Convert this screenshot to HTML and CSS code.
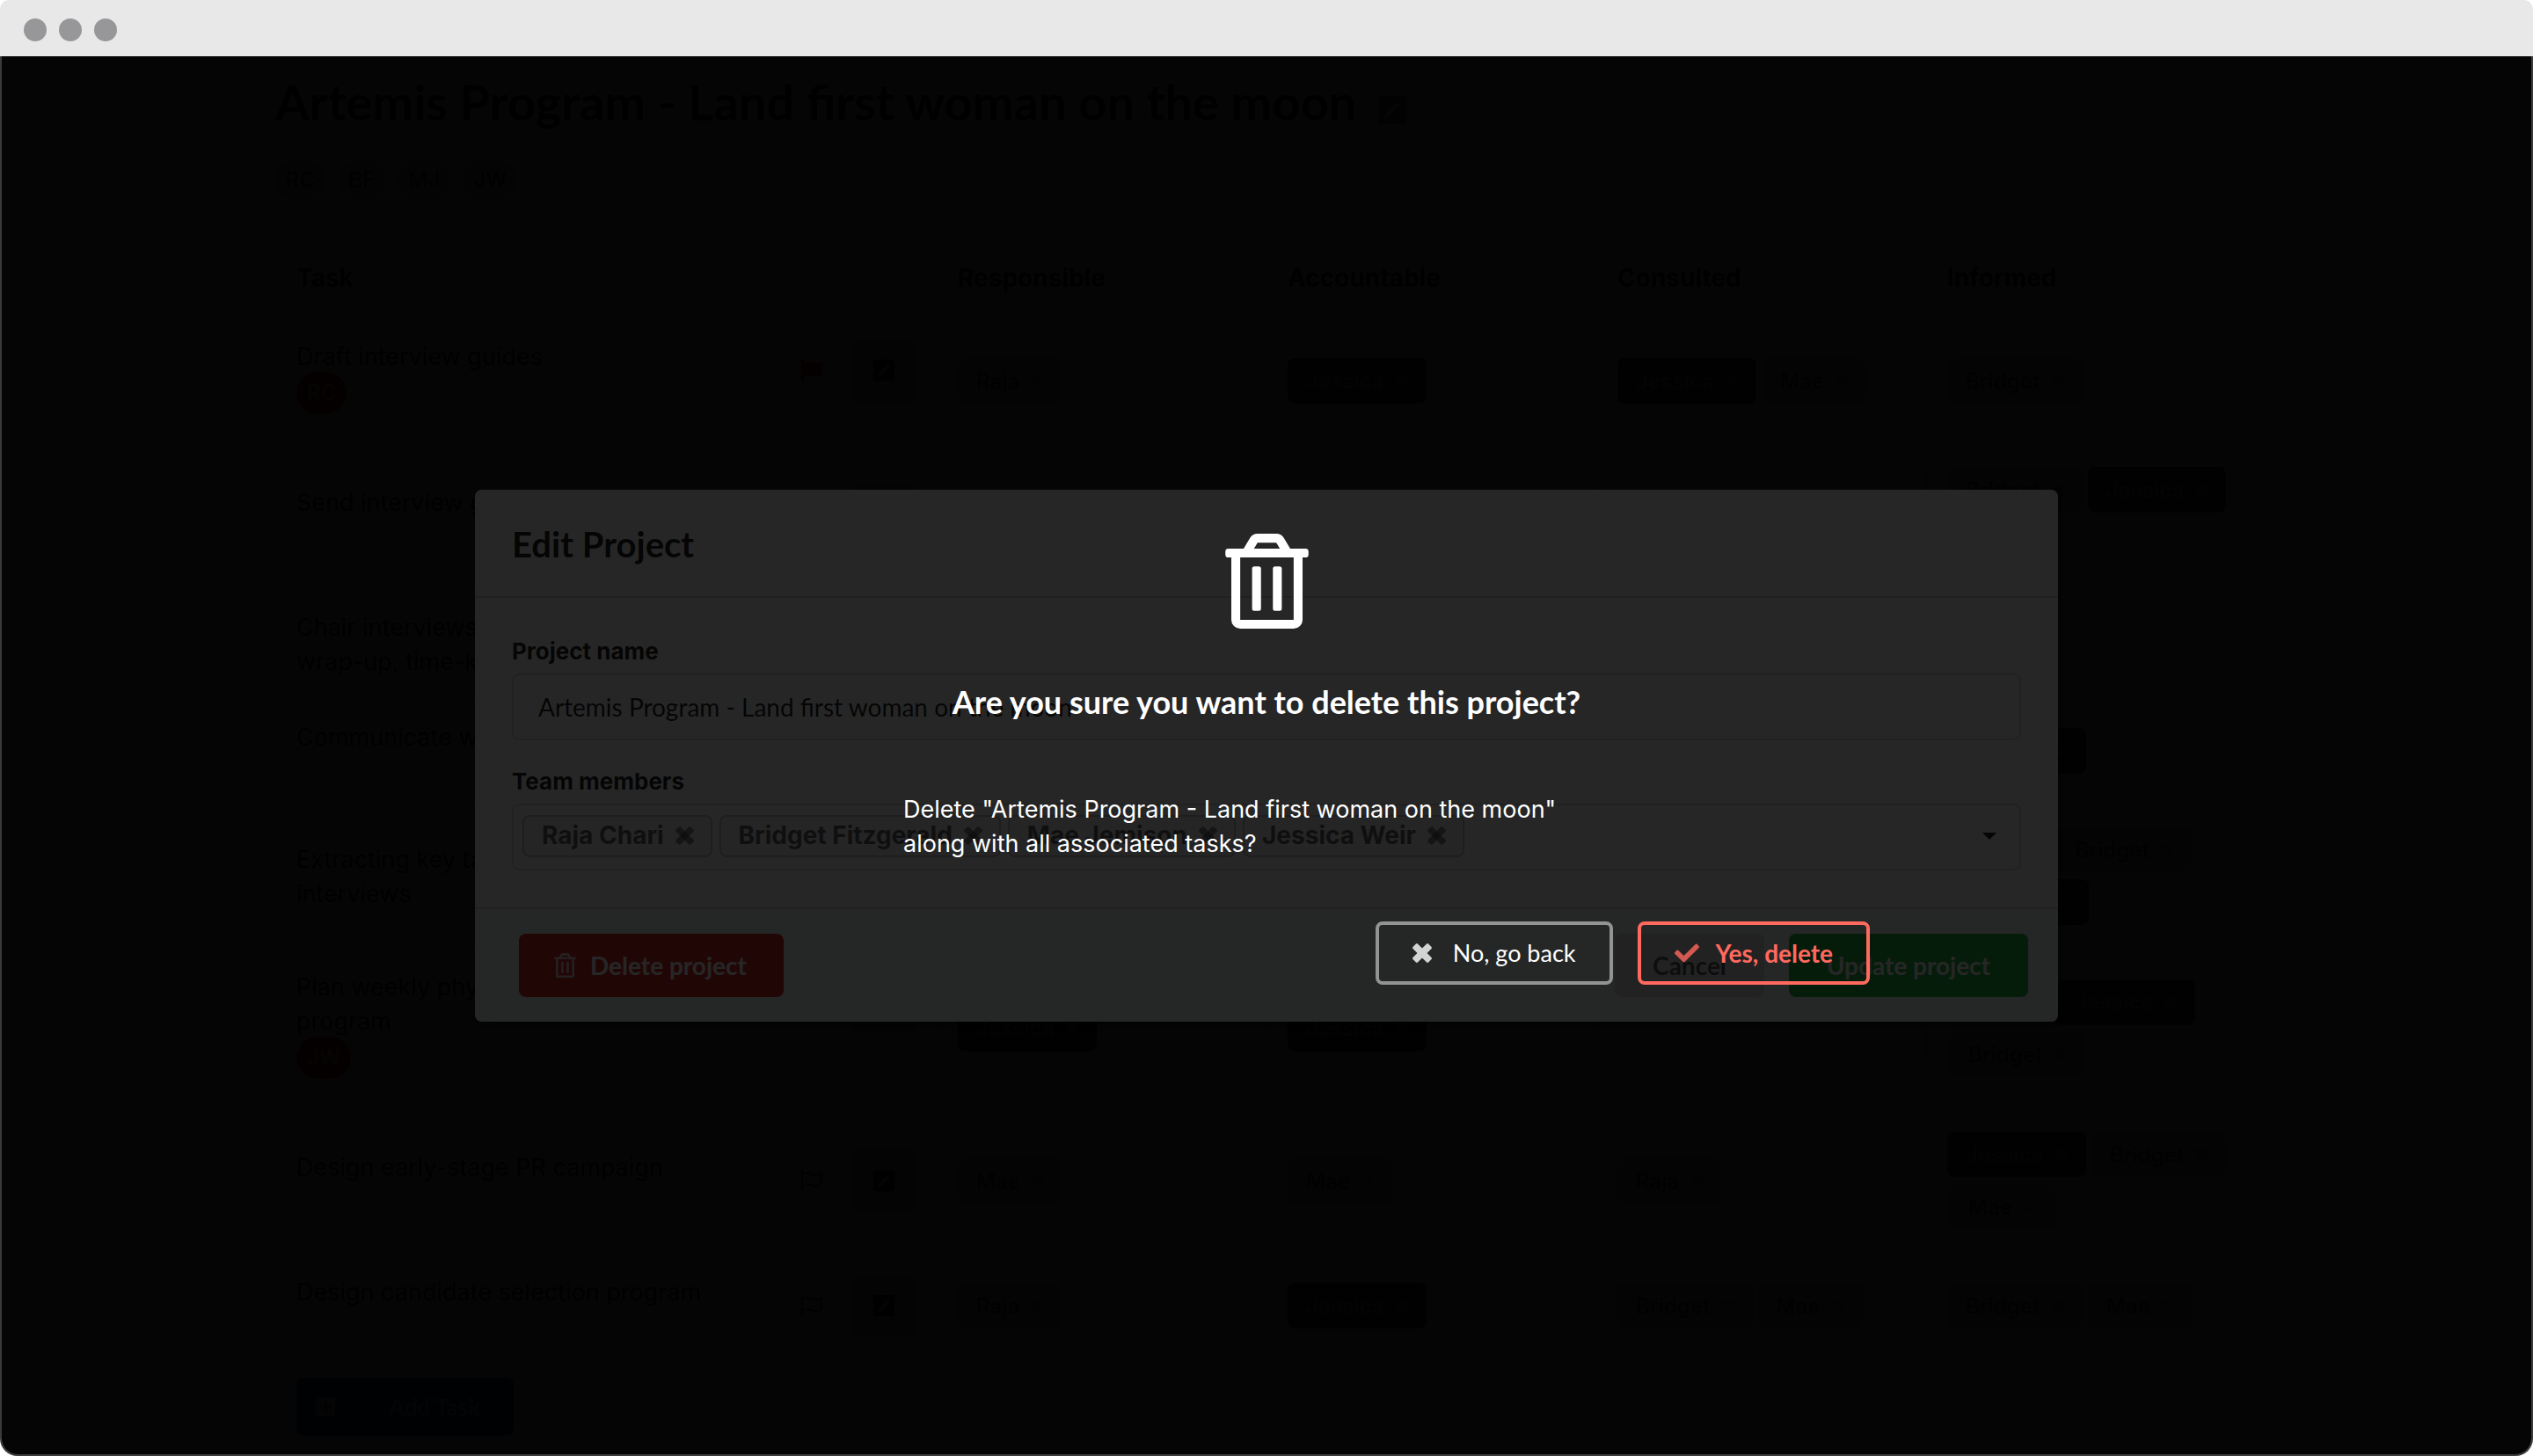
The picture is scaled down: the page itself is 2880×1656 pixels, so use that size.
FILE: index.html
```html
<!DOCTYPE html>
<html lang="en">
<head>
<meta charset="utf-8">
<title>Artemis Program</title>
<link rel="stylesheet" href="styles.css">
</head>
<body>
<svg class="sprite" aria-hidden="true">
  <symbol id="i-close" viewBox="0 0 22 22"><rect x="-12.500" y="-3.900" width="25" height="7.800" rx="1.800" transform="translate(11 11) rotate(45)"/><rect x="-12.500" y="-3.900" width="25" height="7.800" rx="1.800" transform="translate(11 11) rotate(-45)"/></symbol>
  <symbol id="i-check" viewBox="0 0 512 512"><path d="M173.898 439.404l-166.4-166.4c-9.997-9.997-9.997-26.206 0-36.204l36.203-36.204c9.997-9.998 26.207-9.998 36.204 0L192 312.69 432.095 72.596c9.997-9.997 26.207-9.997 36.204 0l36.203 36.204c9.997 9.997 9.997 26.206 0 36.204l-294.4 294.401c-9.998 9.997-26.207 9.997-36.204-.001z"/></symbol>
  <symbol id="i-trash" viewBox="0 0 448 512"><path d="M268 416h24a12 12 0 0 0 12-12V188a12 12 0 0 0-12-12h-24a12 12 0 0 0-12 12v216a12 12 0 0 0 12 12zM432 80h-82.41l-34-56.7A48 48 0 0 0 274.41 0H173.59a48 48 0 0 0-41.16 23.3L98.41 80H16A16 16 0 0 0 0 96v16a16 16 0 0 0 16 16h16v336a48 48 0 0 0 48 48h288a48 48 0 0 0 48-48V128h16a16 16 0 0 0 16-16V96a16 16 0 0 0-16-16zM171.84 50.91A6 6 0 0 1 177 48h94a6 6 0 0 1 5.15 2.91L293.61 80H154.39zM368 464H80V128h288zm-212-48h24a12 12 0 0 0 12-12V188a12 12 0 0 0-12-12h-24a12 12 0 0 0-12 12v216a12 12 0 0 0 12 12z"/></symbol>
  <symbol id="i-flag" viewBox="0 0 512 512"><path d="M349.565 98.783C295.978 98.783 251.721 64 184.348 64c-24.955 0-47.309 4.384-68.045 12.013a55.947 55.947 0 0 0 3.586-23.562C118.117 24.015 94.806 1.206 66.338.048 34.345-1.254 8 24.296 8 56c0 19.026 9.497 35.825 24 45.945V488c0 13.255 10.745 24 24 24h16c13.255 0 24-10.745 24-24v-94.4c28.311-12.064 63.582-22.122 114.435-22.122 53.588 0 97.844 34.783 165.217 34.783 48.169 0 86.667-16.294 122.505-40.858C506.84 359.452 512 349.571 512 339.045v-243.1c0-23.393-24.269-38.87-45.485-29.016-34.338 15.948-76.454 31.854-116.95 31.854z"/></symbol>
  <symbol id="i-flag-outline" viewBox="0 0 512 512"><path d="M56 30v458M56 108c110-50 190 0 260 14 60 10 120-10 172-36v250c-52 30-112 50-172 36-70-14-150-64-260-4" fill="none" stroke="currentColor" stroke-width="48" stroke-linecap="round" stroke-linejoin="round"/></symbol>
  <symbol id="i-edit" viewBox="0 0 448 448"><path fill-rule="evenodd" d="M48 0h352a48 48 0 0 1 48 48v352a48 48 0 0 1-48 48H48a48 48 0 0 1-48-48V48A48 48 0 0 1 48 0zM300 96l52 52-186 186-70 18 18-70z"/></symbol>
  <symbol id="i-plus" viewBox="0 0 448 448"><path fill-rule="evenodd" d="M48 0h352a48 48 0 0 1 48 48v352a48 48 0 0 1-48 48H48a48 48 0 0 1-48-48V48A48 48 0 0 1 48 0zM192 96v96H96v64h96v96h64v-96h96v-64h-96V96z"/></symbol>
</svg>

<div class="window">
  <header class="titlebar"><span class="dot"></span><span class="dot"></span><span class="dot"></span></header>
  <div class="viewport">
    <main class="page">
      <h1 class="page-title">Artemis Program - Land first woman on the moon <svg class="icon title-edit"><use href="#i-edit"/></svg></h1>
      <div class="avatars"><span class="avatar">RC</span><span class="avatar">BF</span><span class="avatar">MJ</span><span class="avatar">JW</span></div>
      <table class="tasks">
        <colgroup><col class="col-task"><col><col><col><col></colgroup>
        <thead><tr><th>Task</th><th>Responsible</th><th>Accountable</th><th>Consulted</th><th>Informed</th></tr></thead>
        <tbody>
          <tr>
            <td><div class="task"><div class="task-name">Draft interview guides<div class="owner"><span class="avatar red">RC</span></div></div><svg class="icon flag flagged"><use href="#i-flag"/></svg><button class="edit" aria-label="Edit task"><svg class="icon"><use href="#i-edit"/></svg></button></div></td>
            <td><div class="labels"><span class="label">Raja<svg class="icon"><use href="#i-close"/></svg></span></div></td>
            <td><div class="labels"><span class="label black">Jessica<svg class="icon"><use href="#i-close"/></svg></span></div></td>
            <td><div class="labels"><span class="label black">Jessica<svg class="icon"><use href="#i-close"/></svg></span><span class="label">Mae<svg class="icon"><use href="#i-close"/></svg></span></div></td>
            <td><div class="labels"><span class="label">Bridget<svg class="icon"><use href="#i-close"/></svg></span></div></td>
          </tr>
          <tr>
            <td><div class="task"><div class="task-name">Send interview guides</div><svg class="icon flag"><use href="#i-flag-outline"/></svg><button class="edit" aria-label="Edit task"><svg class="icon"><use href="#i-edit"/></svg></button></div></td>
            <td></td><td></td><td></td>
            <td><div class="labels"><span class="label">Bridget<svg class="icon"><use href="#i-close"/></svg></span><span class="label black">Jessica<svg class="icon"><use href="#i-close"/></svg></span><span class="label">Mae<svg class="icon"><use href="#i-close"/></svg></span></div></td>
          </tr>
          <tr>
            <td><div class="task"><div class="task-name">Chair interviews<br>wrap-up, time-keeping</div><svg class="icon flag"><use href="#i-flag-outline"/></svg><button class="edit" aria-label="Edit task"><svg class="icon"><use href="#i-edit"/></svg></button></div></td>
            <td></td><td></td><td></td><td></td>
          </tr>
          <tr>
            <td><div class="task"><div class="task-name">Communicate with team</div><svg class="icon flag"><use href="#i-flag-outline"/></svg><button class="edit" aria-label="Edit task"><svg class="icon"><use href="#i-edit"/></svg></button></div></td>
            <td></td><td></td><td></td>
            <td><div class="labels"><span class="label black">Jessica<svg class="icon"><use href="#i-close"/></svg></span></div></td>
          </tr>
          <tr>
            <td><div class="task"><div class="task-name">Extracting key takeaways<br>interviews</div><svg class="icon flag"><use href="#i-flag-outline"/></svg><button class="edit" aria-label="Edit task"><svg class="icon"><use href="#i-edit"/></svg></button></div></td>
            <td></td><td></td><td></td>
            <td><div class="labels"><span class="label">Raja<svg class="icon"><use href="#i-close"/></svg></span><span class="label">Bridget<svg class="icon"><use href="#i-close"/></svg></span><span class="label black">Jessica<svg class="icon"><use href="#i-close"/></svg></span></div></td>
          </tr>
          <tr>
            <td><div class="task"><div class="task-name">Plan weekly physical<br>program<div class="owner"><span class="avatar red">JW</span></div></div><svg class="icon flag"><use href="#i-flag-outline"/></svg><button class="edit" aria-label="Edit task"><svg class="icon"><use href="#i-edit"/></svg></button></div></td>
            <td><div class="labels"><span class="label black">Jessica<svg class="icon"><use href="#i-close"/></svg></span></div></td>
            <td><div class="labels"><span class="label black">Jessica<svg class="icon"><use href="#i-close"/></svg></span></div></td>
            <td></td>
            <td><div class="labels"><span class="label">Raja<svg class="icon"><use href="#i-close"/></svg></span><span class="label black">Jessica<svg class="icon"><use href="#i-close"/></svg></span><span class="label">Bridget<svg class="icon"><use href="#i-close"/></svg></span></div></td>
          </tr>
          <tr>
            <td><div class="task"><div class="task-name">Design early-stage PR campaign</div><svg class="icon flag"><use href="#i-flag-outline"/></svg><button class="edit" aria-label="Edit task"><svg class="icon"><use href="#i-edit"/></svg></button></div></td>
            <td><div class="labels"><span class="label">Mae<svg class="icon"><use href="#i-close"/></svg></span></div></td>
            <td><div class="labels"><span class="label">Mae<svg class="icon"><use href="#i-close"/></svg></span></div></td>
            <td><div class="labels"><span class="label">Raja<svg class="icon"><use href="#i-close"/></svg></span></div></td>
            <td><div class="labels"><span class="label black">Jessica<svg class="icon"><use href="#i-close"/></svg></span><span class="label">Bridget<svg class="icon"><use href="#i-close"/></svg></span><span class="label">Mae<svg class="icon"><use href="#i-close"/></svg></span></div></td>
          </tr>
          <tr>
            <td><div class="task"><div class="task-name">Design candidate selection program</div><svg class="icon flag"><use href="#i-flag-outline"/></svg><button class="edit" aria-label="Edit task"><svg class="icon"><use href="#i-edit"/></svg></button></div></td>
            <td><div class="labels"><span class="label">Raja<svg class="icon"><use href="#i-close"/></svg></span></div></td>
            <td><div class="labels"><span class="label black">Jessica<svg class="icon"><use href="#i-close"/></svg></span></div></td>
            <td><div class="labels"><span class="label">Bridget<svg class="icon"><use href="#i-close"/></svg></span><span class="label">Mae<svg class="icon"><use href="#i-close"/></svg></span></div></td>
            <td><div class="labels"><span class="label">Bridget<svg class="icon"><use href="#i-close"/></svg></span><span class="label">Mae<svg class="icon"><use href="#i-close"/></svg></span></div></td>
          </tr>
          <tr>
            <td><button class="add-task"><svg class="icon"><use href="#i-plus"/></svg>Add Task</button></td>
            <td></td><td></td><td></td><td></td>
          </tr>
        </tbody>
      </table>
    </main>

    <div class="dimmer">
      <section class="modal" role="dialog" aria-labelledby="edit-title">
        <h2 class="modal-title" id="edit-title">Edit Project</h2>
        <div class="modal-body">
          <div class="field">
            <label for="project-name">Project name</label>
            <input class="text-input" id="project-name" type="text" value="Artemis Program - Land first woman on the moon">
          </div>
          <div class="field">
            <label for="members">Team members</label>
            <div class="multi">
              <span class="chip">Raja Chari<svg class="icon"><use href="#i-close"/></svg></span>
              <span class="chip">Bridget Fitzgerald<svg class="icon"><use href="#i-close"/></svg></span>
              <span class="chip">Mae Jemison<svg class="icon"><use href="#i-close"/></svg></span>
              <span class="chip">Jessica Weir<svg class="icon"><use href="#i-close"/></svg></span>
              <input class="multi-search" id="members" type="text" role="combobox" aria-expanded="false">
              <span class="caret"></span>
            </div>
          </div>
        </div>
        <div class="modal-actions">
          <button class="button danger"><svg class="icon"><use href="#i-trash"/></svg>Delete project</button>
          <span class="spacer"></span>
          <button class="button">Cancel</button>
          <button class="button positive">Update project</button>
        </div>
      </section>
    </div>

    <div class="dimmer">
      <section class="confirm" role="alertdialog" aria-labelledby="confirm-title">
        <div class="confirm-head">
          <svg class="icon"><use href="#i-trash"/></svg>
          <h2 class="confirm-title" id="confirm-title">Are you sure you want to delete this project?</h2>
        </div>
        <p class="confirm-text">Delete "Artemis Program - Land first woman on the moon"<br>along with all associated tasks?</p>
        <div class="confirm-actions">
          <button class="outline"><svg class="icon"><use href="#i-close"/></svg>No, go back</button>
          <button class="outline red"><svg class="icon check"><use href="#i-check"/></svg>Yes, delete</button>
        </div>
      </section>
    </div>
  </div>
</div>
</body>
</html>
```
FILE: styles.css
```css
* { box-sizing: border-box; }

body {
  margin: 0;
  background: #fff;
  color: rgba(0, 0, 0, .87);
  font: 27px/39px Inter, "Liberation Sans", sans-serif;
}

h1, h2, p { margin: 0; }

button, input { font-family: Lato, sans-serif; font-size: 28px; border: 0; }

.sprite { display: none; }
.icon { flex: none; fill: currentColor; }

/* Window frame */
.window { display: flex; flex-direction: column; height: 100vh; }

.titlebar {
  display: flex;
  flex: none;
  align-items: center;
  gap: 14px;
  height: 64px;
  padding: 4px 27px 0;
  border-radius: 10px 10px 0 0;
  background: #e8e8e8;
}
.dot { width: 26px; height: 26px; border-radius: 50%; background: #979799; }

.viewport {
  position: relative;
  flex: 1;
  min-height: 0;
  overflow: hidden;
  border: 2px solid #3c3a3a;
  border-top: 0;
  border-radius: 0 0 20px 20px;
}

/* Project page */
.page { max-width: 2254px; margin: 0 auto; padding-top: 16px; }

.page-title {
  display: flex;
  align-items: center;
  gap: 25px;
  font: bold 56px/72px Lato, sans-serif;
}
.title-edit { width: 32px; height: 32px; margin-top: 18px; opacity: .7; }

.avatars { display: flex; gap: 14px; margin: 29px 0 40px; }
.avatar {
  padding: 0 12px;
  border-radius: 24px;
  background: #ccc;
  color: rgba(0, 0, 0, .6);
  font-size: 24px;
  font-weight: 600;
  line-height: 48px;
}
.avatar.red { background: #db2828; color: rgba(255, 255, 255, .7); }

.tasks {
  width: 100%;
  table-layout: fixed;
  border: 2px solid rgba(34, 36, 38, .15);
  border-radius: 8px;
  border-collapse: separate;
  border-spacing: 0;
}
.col-task { width: 750px; }
.tasks th {
  height: 92px;
  padding: 0 22px;
  border-bottom: 2px solid rgba(34, 36, 38, .15);
  background: #f9fafb;
  font-size: 28px;
  text-align: left;
}
.tasks td {
  padding: 22px;
  border-bottom: 2px solid rgba(34, 36, 38, .15);
}
.tasks th + th, .tasks td + td { border-left: 2px solid rgba(34, 36, 38, .15); }

.task { display: flex; align-items: flex-start; gap: 31px; }
.task-name { flex: 1; padding-top: 1px; }
.owner { display: flex; align-items: flex-start; height: 58px; margin-top: -2px; }
.flag { width: 28px; height: 26px; margin-top: 23px; opacity: .8; }
.flagged { color: #db2828; opacity: 1; }
.edit { height: 72px; padding: 0 26px; border-radius: 8px; background: #ccc; }
.edit .icon { display: block; width: 24px; height: 24px; }

.labels { display: flex; flex-wrap: wrap; row-gap: 8px; padding: 4px 0; margin-right: -20px; }
.label {
  display: flex;
  align-items: center;
  gap: 12px;
  height: 52px;
  margin: 0 3px;
  padding: 0 20px 0 21px;
  border-radius: 8px;
  background: #ccc;
  color: rgba(0, 0, 0, .6);
  font-size: 24px;
  font-weight: 600;
}
.label:first-child { margin-left: 0; }
.label.black { background: #3a3b3c; color: rgba(255, 255, 255, .5); }
.label .icon { width: 16px; height: 16px; opacity: .4; }

.add-task {
  display: flex;
  align-items: center;
  gap: 61px;
  height: 66px;
  padding: 0 38px 0 22px;
  border-radius: 8px;
  background: #1556a0;
  color: rgba(255, 255, 255, .7);
  font-size: 26px;
  font-weight: bold;
}
.add-task .icon { width: 22px; height: 22px; }

/* Dialogs */
.dimmer {
  position: absolute;
  inset: 0;
  display: flex;
  align-items: center;
  justify-content: center;
  background: rgba(0, 0, 0, .85);
}

.modal {
  width: 1800px;
  max-width: 95%;
  border-radius: 8px;
  background: #fff;
  box-shadow: 2px 6px 6px rgba(0, 0, 0, .2), 2px 6px 30px 4px rgba(0, 0, 0, .2);
}
.modal-title {
  padding: 37px 42px 33px;
  border-bottom: 2px solid rgba(34, 36, 38, .15);
  font: bold 40px/51px Lato, sans-serif;
}
.modal-body { display: flex; flex-direction: column; gap: 28px; padding: 42px; }
.field { display: flex; flex-direction: column; gap: 6px; }
.field label { font-size: 26px; font-weight: bold; line-height: 38px; }

.text-input {
  height: 76px;
  padding: 0 28px;
  border: 2px solid rgba(34, 36, 38, .15);
  border-radius: 8px;
  background: #fff;
  color: rgba(0, 0, 0, .87);
}
.multi {
  display: flex;
  align-items: center;
  gap: 8px;
  height: 76px;
  padding: 0 26px 2px 10px;
  border: 2px solid rgba(34, 36, 38, .15);
  border-radius: 8px;
}
.chip {
  display: flex;
  align-items: center;
  gap: 13px;
  height: 48px;
  padding: 0 19px 0 20px;
  border: 2px solid rgba(34, 36, 38, .2);
  border-radius: 8px;
  background: #f4f4f4;
  color: rgba(0, 0, 0, .6);
  font-size: 28px;
  font-weight: 700;
}
.chip .icon { width: 21px; height: 21px; opacity: .7; }
.multi-search { flex: 1; min-width: 0; background: transparent; }
.caret { border: 8px solid transparent; border-top-color: rgba(0, 0, 0, .87); border-bottom: 0; }

.modal-actions {
  display: flex;
  align-items: center;
  gap: 28px;
  padding: 28px 34px 28px 50px;
  border-top: 2px solid rgba(34, 36, 38, .15);
  border-radius: 0 0 8px 8px;
  background: #f9fafb;
}
.spacer { flex: 1; }
.button {
  display: flex;
  align-items: center;
  gap: 16px;
  height: 72px;
  padding: 0 43px;
  border-radius: 8px;
  background: #e0e1e2;
  color: rgba(0, 0, 0, .6);
  font-weight: bold;
}
.button .icon { width: 25px; height: 28px; opacity: .8; }
.danger { padding: 0 42px 0 40px; background: #db2828; color: #fff; }
.positive { background: #21ba45; color: #fff; }

.confirm { width: 1440px; max-width: 95%; color: #fff; }
.confirm-head {
  display: flex;
  flex-direction: column;
  align-items: center;
  gap: 60px;
  padding: 36px 42px;
}
.confirm-head .icon { width: 95px; height: 108px; }
.confirm-title { font: bold 36px/46px Lato, sans-serif; }
.confirm-text { width: 826px; max-width: 100%; margin: 0 auto; padding: 44px 0 41px; }
.confirm-actions { display: flex; justify-content: flex-end; gap: 28px; padding: 28px 34px; }
.outline {
  display: flex;
  align-items: center;
  gap: 24px;
  height: 72px;
  padding: 0 38px;
  border-radius: 8px;
  border: 4px solid rgba(255, 255, 255, .5);
  background: transparent;
  color: #fff;
  font-size: 27px;
}
.outline .icon { width: 22px; height: 22px; opacity: .8; }
.outline .check { width: 28px; height: 28px; }
.outline.red { gap: 19px; border-color: #ff695e; color: #ff695e; font-size: 28px; font-weight: bold; }
```
